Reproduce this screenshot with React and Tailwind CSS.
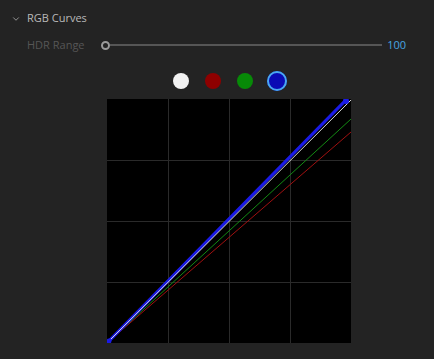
import { ChevronDown } from "lucide-react";

const curves = [
  { color: "#a01010", x2: 244, y2: 33, w: 1 },
  { color: "#138a13", x2: 244, y2: 20, w: 1 },
  { color: "#1a1ae6", x2: 239, y2: 1, w: 3.2 },
  { color: "#d8d8d8", x2: 244, y2: 1, w: 1 },
];

const channels = [
  { name: "luma", cls: "h-[16px] w-[16px] bg-[#f2f2f2]" },
  { name: "red", cls: "h-[16px] w-[16px] bg-[#8e0000]" },
  { name: "green", cls: "h-[16px] w-[16px] bg-[#078a07]" },
  { name: "blue", cls: "h-[20px] w-[20px] bg-[#0a0ab4] ring-2 ring-[#4aa9ef] ring-inset" },
];

export default function App() {
  return (
    <div
      className="h-[359px] w-[434px] overflow-hidden bg-[#232323]"
      style={{ fontFamily: '"Open Sans", "Liberation Sans", sans-serif' }}
    >
      <div className="flex h-[36px] items-center pl-[11px] pt-[1px]">
        <ChevronDown className="h-[10px] w-[10px] text-[#a8a8a8]" strokeWidth={2} />
        <span className="ml-[6px] text-[11px] text-[#b9b9b9]">RGB Curves</span>
      </div>

      <div className="flex h-[18px] items-center">
        <span className="ml-[27px] w-[74px] text-[11px] text-[#565656]">HDR Range</span>
        <div className="flex flex-1 items-center">
          <div className="h-[9px] w-[9px] shrink-0 rounded-full border-2 border-[#9a9a9a] bg-[#232323]" />
          <div className="h-[2px] w-[272px] bg-[#565656]" />
        </div>
        <span className="mr-[28px] text-[11px] text-[#48a6e0]">100</span>
      </div>

      <div className="ml-[107px] flex h-[45px] w-[244px] items-start justify-center gap-[16px] pt-[17px]">
        {channels.map((c) => (
          <div key={c.name} className="flex h-[20px] w-[16px] items-center justify-center">
            <div className={`shrink-0 rounded-full ${c.cls}`} />
          </div>
        ))}
      </div>

      <div className="ml-[107px] h-[244px] w-[244px] bg-black">
        <svg width="244" height="244" viewBox="0 0 244 244">
          {[61, 122, 183].map((p) => (
            <g key={p} stroke="#2a2a2a" strokeWidth="1">
              <line x1={p + 0.5} y1="0" x2={p + 0.5} y2="244" />
              <line x1="0" y1={p + 0.5} x2="244" y2={p + 0.5} />
            </g>
          ))}
          {curves.map((c) => (
            <line
              key={c.color}
              x1="1"
              y1="243"
              x2={c.x2}
              y2={c.y2}
              stroke={c.color}
              strokeWidth={c.w}
              strokeLinecap="round"
            />
          ))}
          <circle cx="239" cy="2" r="3" fill="#1a1ae6" />
          <circle cx="2" cy="242" r="2.5" fill="#1a1ae6" />
        </svg>
      </div>
    </div>
  );
}
